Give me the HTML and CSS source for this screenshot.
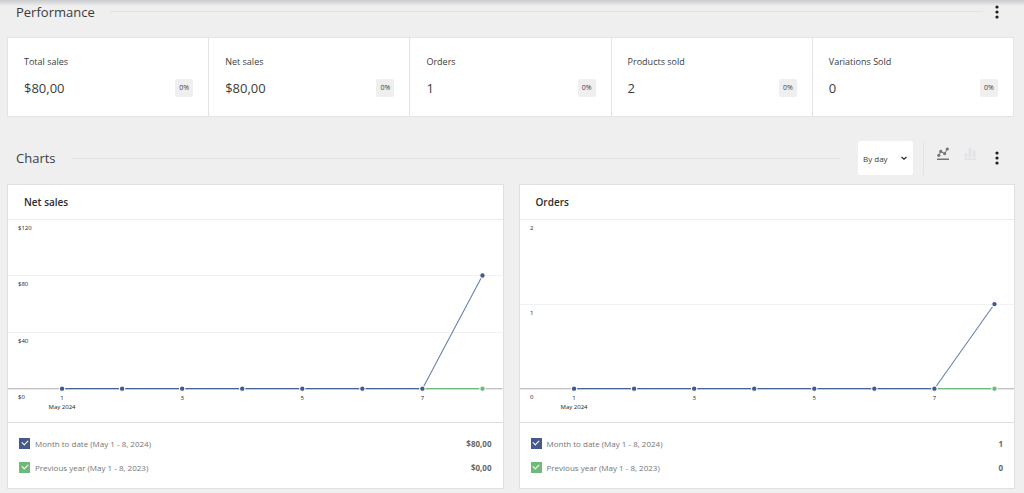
FILE: index.html
```html
<!DOCTYPE html>
<html lang="en">
<head>
<meta charset="utf-8">
<title>Analytics overview</title>
<link rel="stylesheet" href="styles.css">
</head>
<body>
<main class="page">
  <header class="section-head section-head-top">
    <h2 class="section-title">Performance</h2>
    <hr class="rule">
    <button class="more" type="button" aria-label="Performance options">
      <svg viewBox="0 0 4 14" width="4" height="14"><circle cx="2" cy="2" r="1.6"/><circle cx="2" cy="7" r="1.6"/><circle cx="2" cy="12" r="1.6"/></svg>
    </button>
  </header>

  <ul class="stats">
    <li class="stat"><span class="stat-label">Total sales</span><div class="stat-row"><span class="stat-value">$80,00</span><span class="badge">0%</span></div></li>
    <li class="stat"><span class="stat-label">Net sales</span><div class="stat-row"><span class="stat-value">$80,00</span><span class="badge">0%</span></div></li>
    <li class="stat"><span class="stat-label">Orders</span><div class="stat-row"><span class="stat-value">1</span><span class="badge">0%</span></div></li>
    <li class="stat"><span class="stat-label">Products sold</span><div class="stat-row"><span class="stat-value">2</span><span class="badge">0%</span></div></li>
    <li class="stat"><span class="stat-label">Variations Sold</span><div class="stat-row"><span class="stat-value">0</span><span class="badge">0%</span></div></li>
  </ul>

  <header class="section-head section-head-charts">
    <h2 class="section-title">Charts</h2>
    <hr class="rule">
    <div class="picker">
      <select class="interval" aria-label="Interval"><option>By day</option><option>By week</option></select>
      <svg class="chevron" viewBox="0 0 8 5" width="8" height="5"><path d="M1.5 1 4 3.3 6.5 1"/></svg>
    </div>
    <div class="types">
      <button class="type type-active" type="button" aria-label="Line chart">
        <svg viewBox="0 0 14 14" width="14" height="14"><path class="stroke" d="M2.8 9.3 4.8 5.6 8.6 7.6 11.2 3.2"/><circle cx="2.8" cy="9.3" r="1.6"/><circle cx="4.8" cy="5.4" r="1.6"/><circle cx="8.6" cy="7.6" r="1.6"/><circle cx="11.3" cy="3" r="1.6"/><path d="M1 12.5h12V14H1z"/></svg>
      </button>
      <button class="type" type="button" aria-label="Bar chart">
        <svg viewBox="0 0 14 14" width="14" height="14"><path d="M1.6 7.2h2.6v4.3H1.6zM5.7 2h2.6v9.5H5.7zM9.8 4.2h2.6v7.3H9.8zM1 12.5h12V14H1z"/></svg>
      </button>
    </div>
    <button class="more" type="button" aria-label="Chart options">
      <svg viewBox="0 0 4 14" width="4" height="14"><circle cx="2" cy="2" r="1.6"/><circle cx="2" cy="7" r="1.6"/><circle cx="2" cy="12" r="1.6"/></svg>
    </button>
  </header>

  <div class="charts">
    <section class="card">
      <h3 class="card-title">Net sales</h3>
      <svg class="plot" viewBox="0 0 494 202" role="img" aria-label="Net sales by day">
        <path class="grid" d="M0 55.5H494M0 112.5H494"/>
        <path class="axis" d="M0 168.5H494"/>
        <path class="line-prev" d="M414 168.5H474"/>
        <path class="line-now" d="M54 168.5H414"/>
        <path class="line-rise" d="M414 168.5 474 55.5"/>
        <g class="dots-now"><circle cx="54" cy="168.5" r="2.7"/><circle cx="114" cy="168.5" r="2.7"/><circle cx="174" cy="168.5" r="2.7"/><circle cx="234" cy="168.5" r="2.7"/><circle cx="294" cy="168.5" r="2.7"/><circle cx="354" cy="168.5" r="2.7"/><circle cx="414" cy="168.5" r="2.7"/><circle cx="474" cy="55.5" r="2.7"/></g>
        <circle class="dot-prev" cx="474" cy="168.5" r="2.7"/>
        <g class="ticks"><text x="10" y="10">$120</text><text x="10" y="66">$80</text><text x="10" y="123">$40</text><text x="10" y="179">$0</text></g>
        <g class="ticks ticks-x"><text x="54" y="180">1</text><text x="54" y="189">May 2024</text><text x="174" y="180">3</text><text x="294" y="180">5</text><text x="414" y="180">7</text></g>
      </svg>
      <div class="legend">
        <label class="legend-row"><input class="check check-now" type="checkbox" checked><span class="legend-name">Month to date (May 1 - 8, 2024)</span><strong class="legend-total">$80,00</strong></label>
        <label class="legend-row"><input class="check check-prev" type="checkbox" checked><span class="legend-name">Previous year (May 1 - 8, 2023)</span><strong class="legend-total">$0,00</strong></label>
      </div>
    </section>

    <section class="card">
      <h3 class="card-title">Orders</h3>
      <svg class="plot" viewBox="0 0 494 202" role="img" aria-label="Orders by day">
        <path class="grid" d="M0 84.5H494"/>
        <path class="axis" d="M0 168.5H494"/>
        <path class="line-prev" d="M414 168.5H474"/>
        <path class="line-now" d="M54 168.5H414"/>
        <path class="line-rise" d="M414 168.5 474 84"/>
        <g class="dots-now"><circle cx="54" cy="168.5" r="2.7"/><circle cx="114" cy="168.5" r="2.7"/><circle cx="174" cy="168.5" r="2.7"/><circle cx="234" cy="168.5" r="2.7"/><circle cx="294" cy="168.5" r="2.7"/><circle cx="354" cy="168.5" r="2.7"/><circle cx="414" cy="168.5" r="2.7"/><circle cx="474" cy="84" r="2.7"/></g>
        <circle class="dot-prev" cx="474" cy="168.5" r="2.7"/>
        <g class="ticks"><text x="10" y="10">2</text><text x="10" y="95">1</text><text x="10" y="179">0</text></g>
        <g class="ticks ticks-x"><text x="54" y="180">1</text><text x="54" y="189">May 2024</text><text x="174" y="180">3</text><text x="294" y="180">5</text><text x="414" y="180">7</text></g>
      </svg>
      <div class="legend">
        <label class="legend-row"><input class="check check-now" type="checkbox" checked><span class="legend-name">Month to date (May 1 - 8, 2024)</span><strong class="legend-total">1</strong></label>
        <label class="legend-row"><input class="check check-prev" type="checkbox" checked><span class="legend-name">Previous year (May 1 - 8, 2023)</span><strong class="legend-total">0</strong></label>
      </div>
    </section>
  </div>
</main>
</body>
</html>
```
FILE: styles.css
```css
* { box-sizing: border-box; }
body {
  margin: 0;
  background: #efefef linear-gradient(#c9cace, #efefef) 0 0 / 100% 6px no-repeat;
  color: #3c3c3c;
  font-family: "Open Sans", "Noto Sans", sans-serif;
}
.page { padding: 0 9px 4px 7px; }
button, select { font: inherit; color: inherit; border: 0; padding: 0; }

.section-head { display: flex; align-items: center; padding: 0 9px; }
.section-head-top { height: 23px; margin-bottom: 14px; }
.section-head-charts { height: 34px; margin: 24px 0 9px; }
.section-title { margin: 0; font-size: 13px; font-weight: 400; line-height: 18px; }
.rule { flex: 1; height: 1px; margin: 0 5px 0 15px; border: 0; background: #e2e2e3; }
.section-head-charts .rule { margin-right: 18px; }
.more { display: flex; justify-content: center; width: 18px; background: none; fill: #1e1e1e; }

.stats {
  display: grid;
  grid-template-columns: repeat(5, 1fr);
  margin: 0 1px 0 0;
  padding: 0;
  list-style: none;
  background: #fff;
  border: 1px solid #e4e4e5;
  border-right: 0;
}
.stat { padding: 16px 15px 16px 16px; border-right: 1px solid #e4e4e5; }
.stat-label { display: block; font-size: 9px; line-height: 16px; }
.stat-row { display: flex; align-items: center; justify-content: space-between; margin-top: 9px; padding-bottom: 3px; }
.stat-value { font-size: 13px; line-height: 18px; }
.badge { min-width: 18px; text-align: center; background: #efefef; border-radius: 2px; font-size: 7px; line-height: 18px; }

.picker { display: grid; align-items: center; width: 55px; }
.picker > * { grid-area: 1 / 1; }
.interval { appearance: none; width: 100%; height: 34px; padding: 0 5px; border-radius: 2px; background: #fff; font-size: 8px; }
.chevron { justify-self: end; margin-right: 5px; fill: none; stroke: #222; stroke-width: 1.2; pointer-events: none; }
.types { display: flex; gap: 13px; height: 34px; margin: 0 11px 0 10px; padding: 5px 0 0 12px; border-left: 1px solid #e4e4e5; }
.type { display: flex; width: 14px; height: 14px; background: none; fill: #e0e2e6; }
.type-active { fill: #757575; }
.stroke { fill: none; stroke: #757575; }

.charts { display: grid; grid-template-columns: 1fr 1fr; gap: 15px; }
.card { background: #fff; border: 1px solid #e0e0e0; }
.card-title { margin: 0; padding: 8px 16px; border-bottom: 1px solid #ececec; font-size: 10px; font-weight: 600; line-height: 18px; color: #2c2c2c; }
.plot { display: block; width: 100%; }
.plot path { fill: none; }
.grid { stroke: #f1f1f1; }
.axis { stroke: #adadad; }
.line-now { stroke: #44678f; stroke-width: 1.2; }
.line-rise { stroke: #6079a7; }
.line-prev { stroke: #6fb97b; stroke-width: 1.2; }
.dots-now { fill: #44598c; stroke: #fff; }
.dot-prev { fill: #6fb97b; stroke: #fff; }
.ticks { font-size: 6px; fill: #222; }
.ticks-x { text-anchor: middle; }

.legend { padding: 8px 11px 9px; border-top: 1px solid #dcdcdc; }
.legend-row { display: flex; align-items: center; height: 24px; font-size: 8px; color: #757575; }
.legend-name { margin-left: 5px; }
.legend-total { margin-left: auto; font-weight: 700; color: #666; }
.check {
  appearance: none;
  width: 11px;
  height: 11px;
  margin: 0;
  display: grid;
  place-items: center;
}
.check::before { content: ""; width: 5px; height: 3px; margin-bottom: 2px; border: solid #fff; border-width: 0 0 1px 1px; transform: rotate(-45deg); }
.check-now { background: #44598c; }
.check-prev { background: #6fb97b; }
.check:not(:checked)::before { visibility: hidden; }
```
